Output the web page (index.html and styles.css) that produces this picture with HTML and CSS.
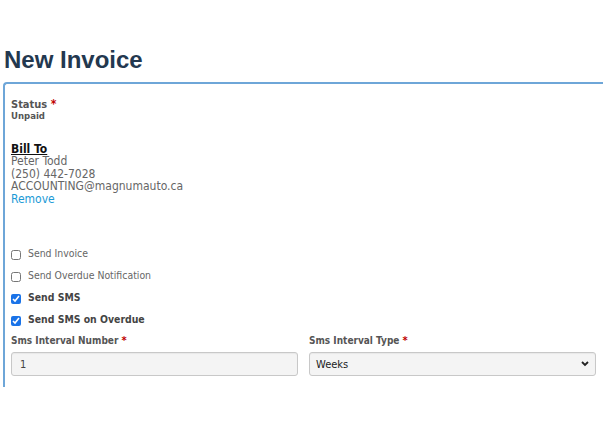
FILE: index.html
```html
<!DOCTYPE html>
<html>
<head>
<meta charset="utf-8">
<link rel="stylesheet" href="styles.css">
</head>
<body>
<div class="page">
  <h1 class="title">New Invoice</h1>
  <div class="card">
    <div class="status">
      <div class="label">Status <span class="req">*</span></div>
      <div class="status-value">Unpaid</div>
    </div>
    <div class="bill">
      <div class="bill-title">Bill To</div>
      <div class="bill-line">Peter Todd</div>
      <div class="bill-line">(250) 442-7028</div>
      <div class="bill-line">ACCOUNTING@magnumauto.ca</div>
      <a class="remove" href="#">Remove</a>
    </div>
    <div class="checks">
      <label class="check"><input type="checkbox"><span>Send Invoice</span></label>
      <label class="check"><input type="checkbox"><span>Send Overdue Notification</span></label>
      <label class="check bold"><input type="checkbox" checked><span>Send SMS</span></label>
      <label class="check bold"><input type="checkbox" checked><span>Send SMS on Overdue</span></label>
    </div>
    <div class="fields">
      <div class="field">
        <div class="label">Sms Interval Number <span class="req">*</span></div>
        <input class="input" type="text" value="1">
      </div>
      <div class="field">
        <div class="label">Sms Interval Type <span class="req">*</span></div>
        <div class="select">
          <span>Weeks</span>
          <svg class="chev" width="8" height="6" viewBox="0 0 8 6"><path d="M1 1 L4 4 L7 1" fill="none" stroke="#222" stroke-width="1.8"/></svg>
        </div>
      </div>
    </div>
  </div>
</div>
</body>
</html>
```
FILE: styles.css
```css
html, body {
  margin: 0;
  padding: 0;
  background: #fff;
}
body {
  font-family: "DejaVu Sans Condensed", "DejaVu Sans", Verdana, sans-serif;
  font-stretch: semi-condensed;
  overflow: hidden;
}
.page {
  padding-left: 3px;
}
.title {
  font-family: "Liberation Sans", Arial, sans-serif;
  font-stretch: normal;
  font-weight: bold;
  font-size: 24px;
  line-height: 29px;
  color: #23384f;
  margin: 45px 0 8px 1px;
}
.card {
  width: 640px;
  border-top: 2px solid #6ea6d8;
  border-left: 2px solid #6ea6d8;
  border-top-left-radius: 4px;
  padding: 14px 0 10px 6px;
  box-sizing: border-box;
  height: 305px;
}
.label {
  font-size: 11px;
  font-weight: bold;
  color: #555;
  line-height: 13px;
}
.req {
  color: #c00000;
  font-size: 1.1em;
}
.status-value {
  font-size: 9.5px;
  font-weight: bold;
  color: #555;
  line-height: 10px;
}
.bill {
  margin-top: 22px;
  font-size: 12px;
  line-height: 12.4px;
}
.bill-title {
  font-weight: bold;
  color: #111;
  text-decoration: underline;
}
.bill-line {
  color: #666;
}
.remove {
  color: #1a9ad6;
  text-decoration: none;
}
.checks {
  margin-top: 41px;
  display: flex;
  flex-direction: column;
  gap: 8px;
}
.check {
  display: flex;
  align-items: center;
  gap: 7px;
  font-size: 10.4px;
  color: #666;
  height: 14px;
}
.check input {
  margin: 4px 0 0 0;
  width: 10px;
  height: 10px;
  accent-color: #1a73e8;
}
.check.bold {
  font-weight: bold;
  color: #444;
}
.fields {
  margin-top: 8px;
  display: grid;
  grid-template-columns: 287px 287px;
  column-gap: 11px;
}
.field .label {
  font-size: 10px;
  margin-bottom: 5px;
}
.input, .select {
  box-sizing: border-box;
  width: 287px;
  height: 24px;
  border: 1px solid #c8c8c8;
  border-radius: 3px;
  background: #f4f4f4;
  font-family: "DejaVu Sans Condensed", "DejaVu Sans", Verdana, sans-serif;
  font-stretch: semi-condensed;
  font-size: 11px;
  color: #444;
  padding: 0 8px;
  margin: 0;
  box-shadow: inset 0 1px 1px rgba(0,0,0,0.05);
}
.select {
  display: flex;
  align-items: center;
  justify-content: space-between;
  color: #222;
  padding: 0 6px;
}
.chev {
  display: block;
}
```
